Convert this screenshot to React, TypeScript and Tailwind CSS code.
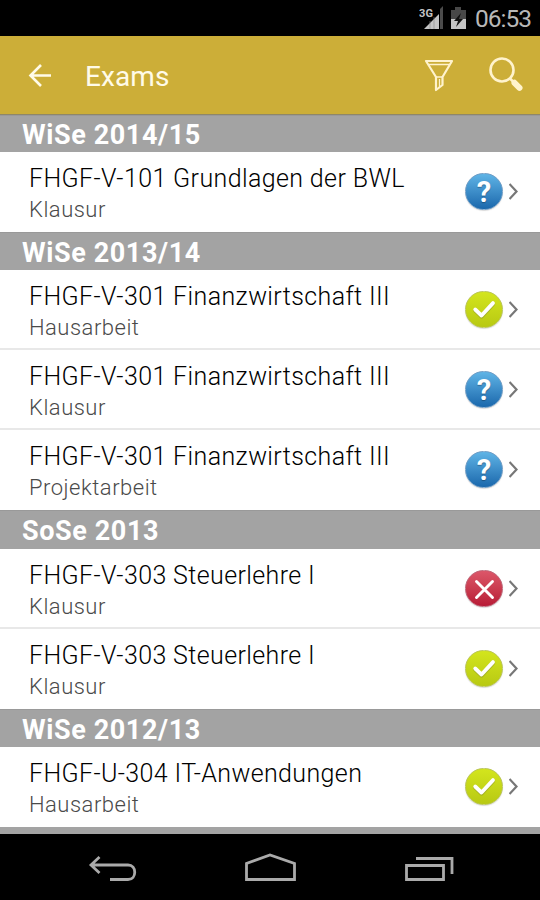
import React from "react";

type Status = "open" | "passed" | "failed";
type Exam = { title: string; kind: string; status: Status };
type Term = { name: string; height: string; exams: Exam[] };

const terms: Term[] = [
  { name: "WiSe 2014/15", height: "h-[37px]", exams: [{ title: "FHGF-V-101 Grundlagen der BWL", kind: "Klausur", status: "open" }] },
  {
    name: "WiSe 2013/14",
    height: "h-[38px]",
    exams: [
      { title: "FHGF-V-301 Finanzwirtschaft III", kind: "Hausarbeit", status: "passed" },
      { title: "FHGF-V-301 Finanzwirtschaft III", kind: "Klausur", status: "open" },
      { title: "FHGF-V-301 Finanzwirtschaft III", kind: "Projektarbeit", status: "open" },
    ],
  },
  {
    name: "SoSe 2013",
    height: "h-[39px]",
    exams: [
      { title: "FHGF-V-303 Steuerlehre I", kind: "Klausur", status: "failed" },
      { title: "FHGF-V-303 Steuerlehre I", kind: "Klausur", status: "passed" },
    ],
  },
  { name: "WiSe 2012/13", height: "h-[38px]", exams: [{ title: "FHGF-U-304 IT-Anwendungen", kind: "Hausarbeit", status: "passed" }] },
];

const badgeColor: Record<Status, string> = {
  open: "bg-linear-to-b from-[#5fb4e6] to-[#1a68ac] border-[#6d9bc4]",
  passed: "bg-linear-to-b from-[#d3e51d] to-[#b8c913] border-[#b9c455]",
  failed: "bg-linear-to-b from-[#dc5669] to-[#b81a36] border-[#bd6577]",
};

function Badge({ status }: { status: Status }) {
  return (
    <div className={`flex h-[37px] w-[38px] items-center justify-center rounded-full border shadow-[0_1px_1px_rgba(0,0,0,0.15)] ${badgeColor[status]}`}>
      {status === "open" && <span className="pt-[2px] text-[29px] leading-none font-bold text-white [text-shadow:0_1px_1px_rgba(0,0,0,0.3)]">?</span>}
      {status === "passed" && (
        <svg width="36" height="36" viewBox="0 0 36 36" fill="none" strokeLinecap="round" strokeLinejoin="round">
          <path d="M9.200 18.500l6.300 6L27 12.100" stroke="#919b2e" strokeOpacity=".6" strokeWidth="4.200" />
          <path d="M9.200 17.500l6.300 6L27 11.100" stroke="#fff" strokeWidth="3.800" />
        </svg>
      )}
      {status === "failed" && (
        <svg width="36" height="36" viewBox="0 0 36 36" fill="none" strokeLinecap="round">
          <path d="M10.500 10.500l16 16M26.500 10.500l-16 16" stroke="#fff" strokeWidth="2.900" />
        </svg>
      )}
    </div>
  );
}

function ExamRow({ exam, last }: { exam: Exam; last: boolean }) {
  return (
    <div className={`flex h-[80px] items-center border-b-2 bg-white pt-px pl-[29px] ${last ? "border-white" : "border-[#e8e8e8]"}`}>
      <div className="flex-1 pt-[6px] whitespace-nowrap">
        <div className="text-[25px] leading-[31px] font-[350] tracking-[0.38px] text-black">{exam.title}</div>
        <div className="text-[22px] leading-[32px] font-[350] tracking-[0.5px] text-[#4a4a4a]">{exam.kind}</div>
      </div>
      <Badge status={exam.status} />
      <svg className="mr-[21px] ml-[6px]" width="10" height="18" viewBox="0 0 10 18" fill="none" stroke="#777" strokeWidth="2.200">
        <path d="M0.500 1l7 7.500-7 7.500" />
      </svg>
    </div>
  );
}

export default function App() {
  return (
    <div className="flex h-[900px] w-[540px] flex-col overflow-hidden bg-black font-[Roboto,sans-serif]">
      <div className="flex h-[36px] items-center justify-end pr-[9px] text-[#b8b8b8]">
        <svg width="50" height="28" viewBox="0 0 50 28">
          <text x="0" y="12.500" fontSize="11" fontWeight="700" fill="#c4c4c4" textLength="14">3G</text>
          <path d="M21 5L24 2V25H21z" fill="#4b4b4b" />
          <path d="M5 25L20 10V25z" fill="#c4c4c4" />
          <path d="M11 17V25M15 13V25" stroke="#888" strokeWidth=".6" />
          <path d="M36 3h6v3h5v19H32V6h4z" fill="#484848" />
          <path d="M32 15h15v10H32z" fill="#c4c4c4" />
          <path d="M42 9l-7 8h4l-2 6 7-8h-4z" fill="#111" />
        </svg>
        <span className="ml-[6px] pt-[2px] text-[24.500px] leading-[34px] tracking-[-1px]">06:53</span>
      </div>
      <div className="flex h-[78px] items-center bg-[#ccae38] text-[#fffbe8]">
        <svg className="ml-[28px]" width="24" height="24" viewBox="0 0 24 24" fill="none" stroke="currentColor" strokeWidth="2.600">
          <path d="M23 12.500H2.500M13 2L2.500 12.500 13 23" />
        </svg>
        <span className="ml-[33px] flex-1 pt-[4px] text-[28px] leading-[40px] tracking-[0.1px]">Exams</span>
        <svg width="30" height="34" viewBox="0 0 30 34" fill="none" stroke="#fff3cd" strokeWidth="2.200" strokeLinejoin="round">
          <path d="M2 3h26L18.500 19v8L12 32V19z" />
          <path d="M5 6.500h20M12 19h6.500M15.500 21v8" strokeWidth="1.300" />
        </svg>
        <svg className="mr-[16px] ml-[34px]" width="36" height="36" viewBox="0 0 36 36" fill="none" stroke="#fff3cd">
          <circle cx="14" cy="13" r="11.500" strokeWidth="2.600" />
          <path d="M22 21.500l4 4" strokeWidth="2.500" />
          <path d="M26.500 25.800l5 5" strokeWidth="6" strokeLinecap="round" />
        </svg>
      </div>
      <div className="h-[720px] overflow-hidden border-t border-[#8f8767] bg-[#a3a3a3]">
        {terms.map((term) => (
          <section key={term.name}>
            <h2 className={`flex items-center border-t border-[#999] bg-[#a3a3a3] pt-[3px] pl-[22px] text-[27px] font-bold tracking-[0.600px] text-white ${term.height}`}>{term.name}</h2>
            {term.exams.map((exam, i) => (
              <ExamRow key={i} exam={exam} last={i === term.exams.length - 1} />
            ))}
          </section>
        ))}
      </div>
      <div className="flex h-[66px] items-center justify-center bg-black">
        <svg width="540" height="66" viewBox="0 834 540 66" fill="none" stroke="#aaa" strokeWidth="2.800">
          <path d="M99.500 857l-8.500 8 8.500 8M91 865h37c9 0 9 14.500 0 14.500h-18" />
          <path d="M246.500 879.500v-16l23.500-8.500 24.500 8.500v16z" />
          <path d="M406.500 865.500h37v14h-37zM416 858.500h36v15.500" />
        </svg>
      </div>
    </div>
  );
}
